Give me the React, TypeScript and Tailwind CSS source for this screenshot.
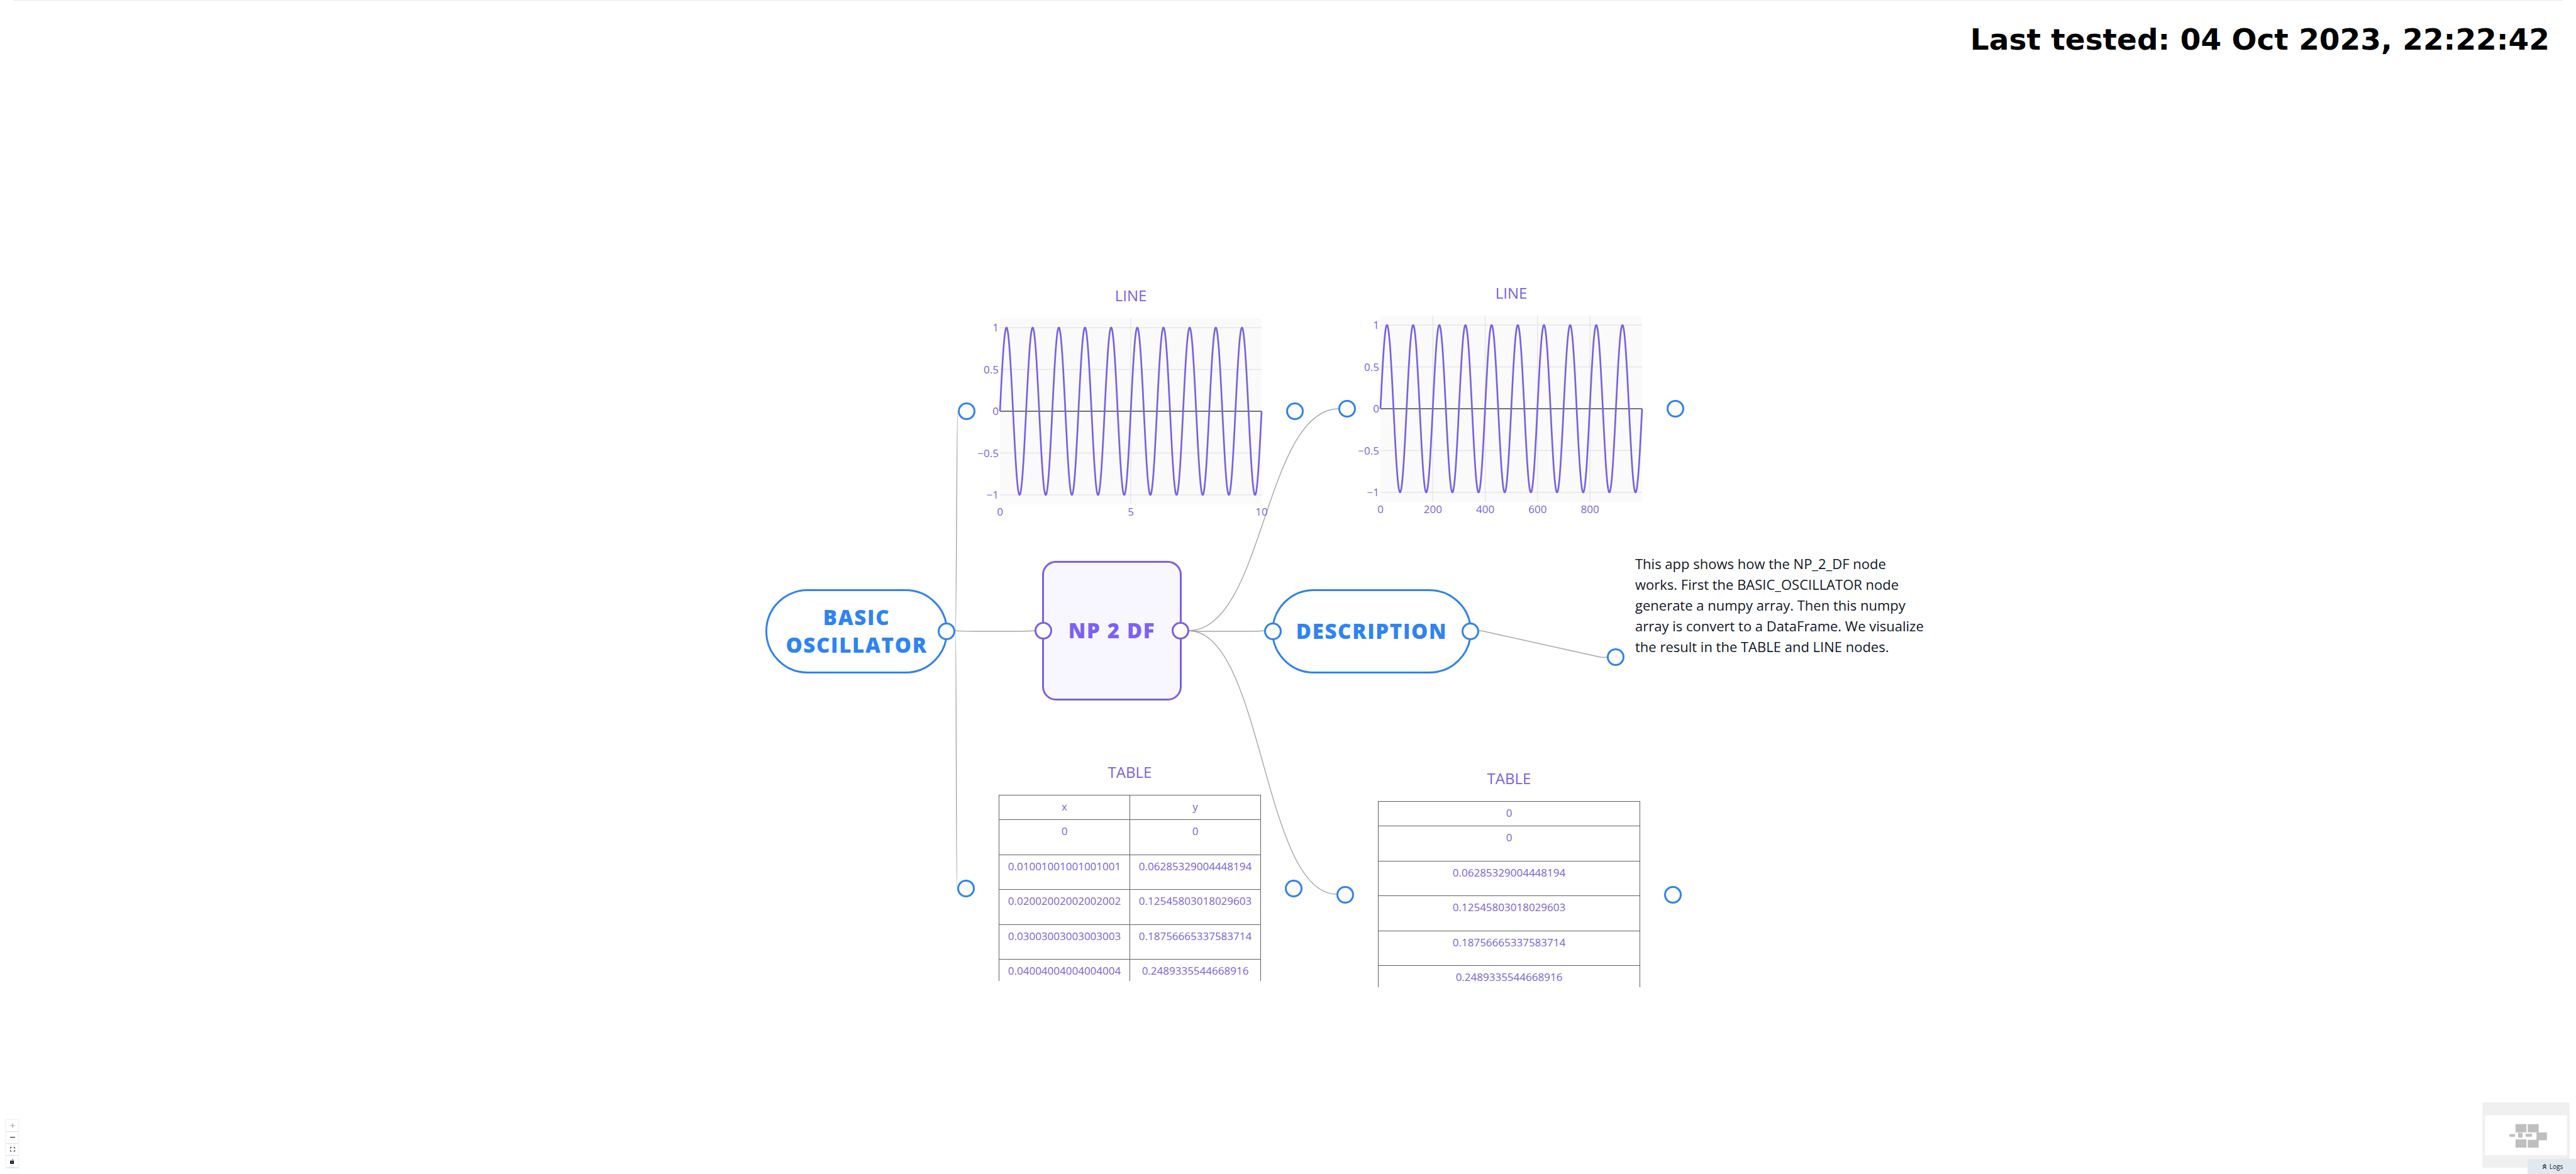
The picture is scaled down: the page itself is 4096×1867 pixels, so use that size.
import type { ReactNode } from "react";
import { ChevronsUp } from "lucide-react";

type Tick = { value: number; label: string };

const HANDLE_COLORS = {
  blue: "border-[#3082f0]",
  purple: "border-[#7860e8]",
};

function Handle({ color = "blue", className = "" }: { color?: "blue" | "purple"; className?: string }) {
  return <span className={`z-10 size-7 shrink-0 rounded-full border-3 bg-white ${HANDLE_COLORS[color]} ${className}`} />;
}

function CanvasNode({ x, y, children }: { x: number; y: number; children: ReactNode }) {
  return (
    <article className="absolute flex items-center" style={{ left: x, top: y }}>
      {children}
    </article>
  );
}

const EDGES = [
  "M1519 1004 C1521 1004 1521 653 1523 653",
  "M1519 1004 C1521 1004 1520 1412 1522 1412",
  "M1519 1003 Q1530 1004 1550 1004 H1610 Q1630 1004 1646 1003",
  "M1890 1003 C2010 1003 2010 650 2129 650",
  "M1890 1003 Q1900 1004 1915 1004 H1985 Q2000 1004 2010 1003",
  "M1890 1003 C2008 1003 2008 1422 2125 1422",
  "M2352 1003 Q2358 1003 2364 1005 L2540 1044 Q2546 1046 2556 1045",
];

function Edges() {
  return (
    <svg className="absolute inset-0 h-full w-full" fill="none" stroke="#a6a6a8" strokeWidth="1.4">
      {EDGES.map((d) => (
        <path key={d} d={d} />
      ))}
    </svg>
  );
}

const PLOT_W = 416;
const PLOT_H = 296;
const LEFT = 39;
const TOP = 20;
const ZERO = TOP + 148;
const AMP = 133;
const Y_TICKS: Tick[] = [
  { value: 1, label: "1" },
  { value: 0.5, label: "0.5" },
  { value: 0, label: "0" },
  { value: -0.5, label: "−0.5" },
  { value: -1, label: "−1" },
];

function LineChart({ xTicks, xMax }: { xTicks: Tick[]; xMax: number }) {
  const points = Array.from({ length: 1000 }, (_, i) => {
    const t = i / 999;
    return `${(LEFT + t * PLOT_W).toFixed(2)},${(ZERO - AMP * Math.sin(t * 20 * Math.PI)).toFixed(2)}`;
  }).join(" ");
  const toX = (v: number) => LEFT + (v / xMax) * PLOT_W;
  return (
    <>
      <Handle />
      <figure className="flex flex-col items-center pb-6">
        <figcaption className="text-2xl leading-8 text-[#7862e0]">LINE</figcaption>
        <svg width="494" height="344" viewBox="0 0 494 344" className="fill-[#7862e0] text-[17px]">
          <rect x={LEFT} y={TOP} width={PLOT_W} height={PLOT_H} fill="#fafafa" />
          <g stroke="#e6e6e6" strokeWidth="1.4">
            {xTicks.filter((t) => t.value > 0 && t.value < xMax).map((t) => (
              <line key={t.label} x1={toX(t.value)} x2={toX(t.value)} y1={TOP} y2={TOP + PLOT_H} />
            ))}
            {Y_TICKS.filter((t) => t.value !== 0).map((t) => (
              <line key={t.label} x1={LEFT} x2={LEFT + PLOT_W} y1={ZERO - t.value * AMP} y2={ZERO - t.value * AMP} />
            ))}
          </g>
          <line x1={LEFT} x2={LEFT + PLOT_W} y1={ZERO} y2={ZERO} stroke="#444444" strokeWidth="1.4" />
          <polyline points={points} fill="none" stroke="#7860e8" strokeWidth="2.7" />
          <g textAnchor="end">
            {Y_TICKS.map((t) => (
              <text key={t.label} x={LEFT - 2} y={ZERO - t.value * AMP + 6}>{t.label}</text>
            ))}
          </g>
          <g textAnchor="middle">
            {xTicks.map((t) => (
              <text key={t.label} x={toX(t.value)} y={TOP + PLOT_H + 18}>{t.label}</text>
            ))}
          </g>
        </svg>
      </figure>
      <Handle />
    </>
  );
}

function DataTable({ head, rows }: { head: string[]; rows: string[][] }) {
  return (
    <>
      <Handle />
      <section className="mx-[38px] flex w-[417px] flex-col items-center pb-[54px] text-[#7862e0]">
        <h2 className="text-2xl leading-8">TABLE</h2>
        <div className="mt-5 h-[296px] w-full overflow-hidden">
          <table className="w-full table-fixed border-collapse text-center text-[17px] leading-6">
            <thead>
              <tr className="h-[39px]">
                {head.map((h) => (
                  <th key={h} className="border border-[#606060] pt-1.5 align-top font-normal">{h}</th>
                ))}
              </tr>
            </thead>
            <tbody>
              {rows.map((r, i) => (
                <tr key={i} className={i % 2 ? "h-[55px]" : "h-14"}>
                  {r.map((c, j) => (
                    <td key={j} className="border border-[#606060] pt-1.5 align-top">{c}</td>
                  ))}
                </tr>
              ))}
            </tbody>
          </table>
        </div>
      </section>
      <Handle />
    </>
  );
}

const XS = ["0", "0.01001001001001001", "0.02002002002002002", "0.03003003003003003", "0.04004004004004004"];
const YS = ["0", "0.06285329004448194", "0.12545803018029603", "0.18756665337583714", "0.2489335544668916"];

function PillBody({ className, children }: { className: string; children: ReactNode }) {
  return (
    <div
      className={`flex h-[134px] items-center justify-center rounded-full border-3 border-[#3082f0] bg-white text-center text-[33px] leading-[44px] font-extrabold tracking-wider text-[#2e83f6] ${className}`}
    >
      {children}
    </div>
  );
}

const MINIMAP_NODES = [
  [76, 50, 25, 19],
  [104, 50, 25, 19],
  [62, 73, 13, 6],
  [82, 70, 10, 11],
  [99, 72, 15, 7],
  [124, 69, 24, 18],
  [76, 85, 25, 19],
  [104, 86, 25, 18],
];

function MiniMap() {
  return (
    <svg className="h-[104px] w-[139px]" viewBox="0 0 200 150">
      <rect width="200" height="150" fill="#f0f0f0" />
      <rect x="6" y="30" width="188" height="91" fill="#ffffff" />
      {MINIMAP_NODES.map(([x, y, w, h], i) => (
        <rect key={i} x={x} y={y} width={w} height={h} fill="#bfbfbf" />
      ))}
    </svg>
  );
}

const CONTROL =
  "flex h-[19px] w-[19px] items-center justify-center border-b border-[#dddddd] bg-white text-[#0f172a] disabled:text-[#a0a0a0]";

function Controls() {
  return (
    <div className="flex flex-col shadow-[0_0_2px_1px_rgba(0,0,0,0.08)]">
      <button type="button" aria-label="zoom in" disabled className={CONTROL}>
        <svg viewBox="0 0 32 32" className="size-2" fill="currentColor">
          <path d="M32 18.133H18.133V32h-4.266V18.133H0v-4.266h13.867V0h4.266v13.867H32z" />
        </svg>
      </button>
      <button type="button" aria-label="zoom out" className={CONTROL}>
        <svg viewBox="0 0 32 5" className="w-2" fill="currentColor">
          <path d="M0 0h32v4.2H0z" />
        </svg>
      </button>
      <button type="button" aria-label="fit view" className={CONTROL}>
        <svg viewBox="0 0 32 30" className="w-2" fill="currentColor">
          <path d="M3.692 4.63c0-.53.4-.938.939-.938h5.215V0H4.708C2.13 0 0 2.054 0 4.63v5.216h3.692V4.631zM27.354 0h-5.2v3.692h5.17c.53 0 .984.4.984.939v5.215H32V4.631A4.624 4.624 0 0027.354 0zm.954 24.83c0 .532-.4.94-.939.94h-5.215v3.768h5.215c2.577 0 4.631-2.13 4.631-4.707v-5.139h-3.692v5.139zm-23.677.94c-.531 0-.939-.4-.939-.94v-5.138H0v5.139c0 2.577 2.13 4.707 4.708 4.707h5.138V25.77H4.631z" />
        </svg>
      </button>
      <button type="button" aria-label="toggle interactivity" className={CONTROL}>
        <svg viewBox="0 0 25 32" className="h-2" fill="currentColor">
          <path d="M21.333 10.667H19.81V7.619C19.81 3.429 16.38 0 12.19 0c-4.114 1.828-1.37 2.133.305 2.438 1.676.305 4.42 2.59 4.42 5.181v3.048H3.047A3.056 3.056 0 000 13.714v15.238A3.056 3.056 0 003.048 32h18.285a3.056 3.056 0 003.048-3.048V13.714a3.056 3.056 0 00-3.048-3.047zM12.19 24.533a3.056 3.056 0 01-3.047-3.047 3.056 3.056 0 013.047-3.048 3.056 3.056 0 013.048 3.048 3.056 3.056 0 01-3.048 3.047z" />
        </svg>
      </button>
    </div>
  );
}

function Flow() {
  return (
    <div className="absolute inset-0">
      <Edges />
      <CanvasNode x={1523} y={454}>
        <LineChart xMax={10} xTicks={[{ value: 0, label: "0" }, { value: 5, label: "5" }, { value: 10, label: "10" }]} />
      </CanvasNode>
      <CanvasNode x={2128} y={450}>
        <LineChart
          xMax={999}
          xTicks={[
            { value: 0, label: "0" },
            { value: 200, label: "200" },
            { value: 400, label: "400" },
            { value: 600, label: "600" },
            { value: 800, label: "800" },
          ]}
        />
      </CanvasNode>
      <CanvasNode x={1217} y={937}>
        <PillBody className="w-[290px]">
          BASIC
          <br />
          OSCILLATOR
        </PillBody>
        <Handle className="-ml-4" />
      </CanvasNode>
      <CanvasNode x={1645} y={892}>
        <Handle color="purple" className="-mr-4" />
        <div className="flex size-[222px] items-center justify-center rounded-[22px] border-3 border-[#7860e8] bg-[#f8f6ff] text-[33px] leading-[44px] font-extrabold tracking-wider text-[#7b61f5]">
          NP 2 DF
        </div>
        <Handle color="purple" className="-ml-4" />
      </CanvasNode>
      <CanvasNode x={2010} y={937}>
        <Handle className="-mr-4" />
        <PillBody className="w-[318px]">DESCRIPTION</PillBody>
        <Handle className="-ml-4" />
      </CanvasNode>
      <CanvasNode x={2555} y={866}>
        <Handle className="mt-[165px]" />
        <p className="ml-[17px] w-[470px] text-[22px] leading-[33px] text-[#111827]">
          This app shows how the NP_2_DF node works. First the BASIC_OSCILLATOR node generate a numpy array. Then this
          numpy array is convert to a DataFrame. We visualize the result in the TABLE and LINE nodes.
        </p>
      </CanvasNode>
      <CanvasNode x={1522} y={1212}>
        <DataTable head={["x", "y"]} rows={XS.map((x, i) => [x, YS[i]])} />
      </CanvasNode>
      <CanvasNode x={2125} y={1222}>
        <DataTable head={["0"]} rows={YS.map((y) => [y])} />
      </CanvasNode>
    </div>
  );
}

export default function App() {
  return (
    <main className="relative flex h-screen w-full flex-col justify-between overflow-hidden bg-white font-['Open_Sans',sans-serif]">
      <Flow />
      <header className="mx-[22px] flex justify-end border-t border-[#e5e5e5] pt-8 pr-5">
        <h1 className="font-['DejaVu_Sans',sans-serif] text-[47px] leading-[60px] font-bold text-black">
          Last tested: 04 Oct 2023, 22:22:42
        </h1>
      </header>
      <footer className="flex items-end justify-between p-2.5">
        <Controls />
        <MiniMap />
      </footer>
      <button
        type="button"
        className="absolute right-0 bottom-0 flex h-6 w-[77px] items-center justify-center gap-0.5 bg-[#e2e8f0] text-[10px] text-[#0f172a]"
      >
        <ChevronsUp className="size-3" strokeWidth={2.5} />
        Logs
      </button>
    </main>
  );
}
